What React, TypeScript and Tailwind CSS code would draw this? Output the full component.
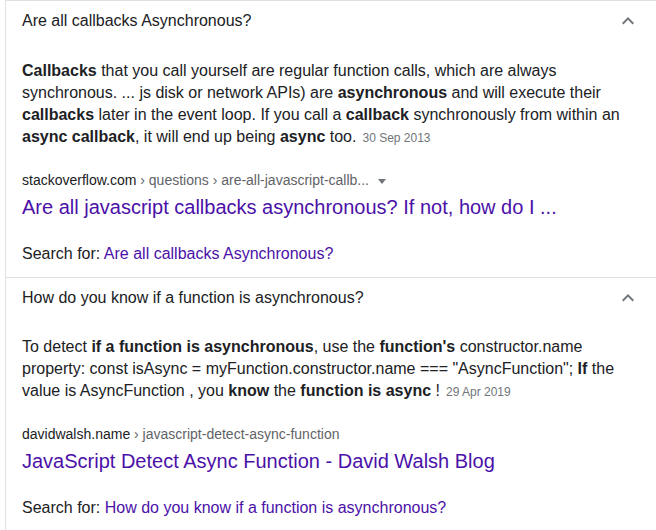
import type { JSX, ReactNode } from "react";

type Item = {
    question: string;
    answer: ReactNode;
    date: string;
    site: string;
    crumbs: string;
    caret: boolean;
    title: string;
    bodyTop: string;
};

function Chevron(): JSX.Element {
    return (
        <svg width="24" height="24" viewBox="0 0 24 24" className="shrink-0">
            <path d="M7.41 15.41L12 10.83l4.59 4.58L18 14l-6-6-6 6z" fill="#70757a" />
        </svg>
    );
}

function Question({ item, last }: { item: Item; last?: boolean }): JSX.Element {
    return (
        <div className={last ? "" : "border-b border-[#e0e0e0]"}>
            <div className="flex h-10 items-center justify-between pl-4 pr-4">
                <span className="text-[16px] leading-[22px] text-[#202124]">{item.question}</span>
                <Chevron />
            </div>
            <div className={`pl-4 pr-[26px] pb-3 ${item.bodyTop}`}>
                <div className="text-[16px] leading-[22px] text-[#202124]">
                    {item.answer}
                    <span className="ml-1.5 text-[12px] text-[#70757a]">{item.date}</span>
                </div>
                <div className="mt-[21px] text-[14px] leading-5">
                    <span className="text-[#202124]">{item.site}</span>
                    <span className="text-[#5f6368]">{item.crumbs}</span>
                    {item.caret && (
                        <span className="ml-[9px] inline-block h-0 w-0 border-x-4 border-t-[5px] border-x-transparent border-t-[#70757a] align-middle"></span>
                    )}
                </div>
                <div className="mt-1 text-[20px] leading-[26px] text-[#4b11a8]">{item.title}</div>
                <div className="mt-[23px] text-[16px] leading-[22px] text-[#202124]">
                    Search for: <span className="text-[#4b11a8]">{item.question}</span>
                </div>
            </div>
        </div>
    );
}

const items: Item[] = [
    {
        question: "Are all callbacks Asynchronous?",
        answer: (
            <>
                <b>Callbacks</b> that you call yourself are regular function calls, which are always synchronous. ... js disk or
                network APIs) are <b>asynchronous</b> and will execute their <b>callbacks</b> later in the event loop. If you call a{" "}
                <b>callback</b> synchronously from within an <b>async callback</b>, it will end up being <b>async</b> too.
            </>
        ),
        date: "30 Sep 2013",
        site: "stackoverflow.com",
        crumbs: " › questions › are-all-javascript-callb...",
        caret: true,
        title: "Are all javascript callbacks asynchronous? If not, how do I ...",
        bodyTop: "pt-[19px]",
    },
    {
        question: "How do you know if a function is asynchronous?",
        answer: (
            <>
                To detect <b>if a function is asynchronous</b>, use the <b>function's</b> constructor.name property: const isAsync =
                myFunction.constructor.name === "AsyncFunction"; <b>If</b> the value is AsyncFunction , you <b>know</b> the{" "}
                <b>function is async</b> !
            </>
        ),
        date: "29 Apr 2019",
        site: "davidwalsh.name",
        crumbs: " › javascript-detect-async-function",
        caret: false,
        title: "JavaScript Detect Async Function - David Walsh Blog",
        bodyTop: "pt-[18px]",
    },
];

export default function App(): JSX.Element {
    return (
        <div className="h-[530px] w-[656px] overflow-hidden bg-white font-['Liberation_Sans',Arial,sans-serif]">
            <div className="ml-[5px] border-l border-t border-[#e0e0e0]">
                {items.map((item, i) => (
                    <Question key={i} item={item} last={i === items.length - 1} />
                ))}
            </div>
        </div>
    );
}
